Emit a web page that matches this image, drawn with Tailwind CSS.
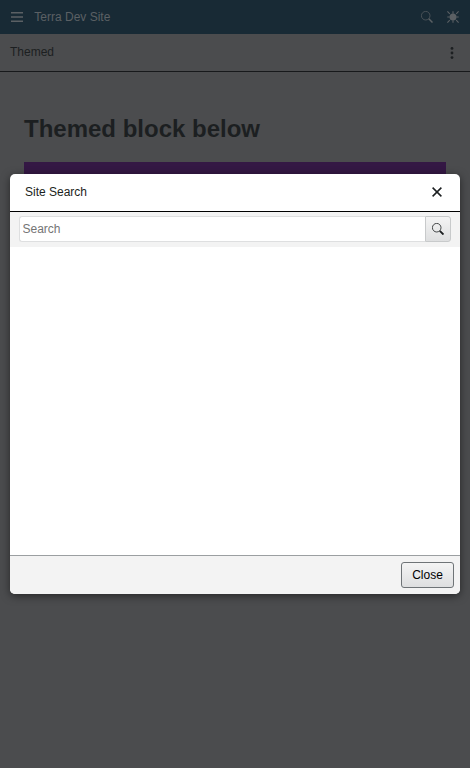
<!DOCTYPE html>
<html lang="en">
<head>
<meta charset="utf-8">
<title>Terra Dev Site</title>
<script src="https://cdn.jsdelivr.net/npm/@tailwindcss/browser@4"></script>
</head>
<body class="h-screen overflow-hidden bg-[#4b4c4e] font-['Liberation_Sans',Arial,sans-serif] text-xs text-[#1c1f21]">
<header class="flex h-[34px] items-center bg-[#182a35] pr-[11px] pl-[11px] text-[#5b6064]">
  <svg class="h-3 w-3" viewBox="0 0 12 12" fill="currentColor"><path d="M0 1h12v1.4H0zM0 5.3h12v1.4H0zM0 9.6h12V11H0z"/></svg>
  <span class="ml-[11.3px] flex-1 leading-[34px]">Terra Dev Site</span>
  <svg class="mr-[14px] h-3 w-3" viewBox="0 0 12 12" fill="none" stroke="currentColor"><circle cx="4.7" cy="4.7" r="4.3" stroke-width=".7"/><path d="M7.8 7.8l3.7 3.7" stroke-width="1.5"/></svg>
  <svg class="h-3 w-3" viewBox="0 0 12 12" fill="none" stroke="currentColor"><circle cx="6" cy="6" r="3.5" fill="currentColor" stroke="none"/><path d="M6 .3v2.4M6 9.3v2.4M.3 6h2.4M9.3 6h2.4M.4.4l2.4 2.4M9.2 9.2l2.4 2.4M11.6.4L9.2 2.8M2.8 9.2L.4 11.6" stroke-width="1.1"/></svg>
</header>
<div class="flex h-[38px] items-center justify-between border-b border-[#17191b] pr-[16px] pb-px pl-[10px]">
  <span class="leading-4">Themed</span>
  <svg class="mt-[2px] h-3 w-[4px]" viewBox="0 0 4 12" fill="currentColor"><circle cx="2" cy="1.4" r="1.4"/><circle cx="2" cy="6" r="1.4"/><circle cx="2" cy="10.6" r="1.4"/></svg>
</div>
<main class="px-6 pt-[42px]">
  <h1 class="text-2xl leading-[30px] font-bold">Themed block below</h1>
  <div class="mt-[18px] h-[50px] bg-[#341844]"></div>
</main>

<section role="dialog" aria-label="Site Search" class="absolute top-[174px] left-[10px] flex h-[420px] w-[450px] flex-col overflow-hidden rounded-[5px] bg-white shadow-[0_2px_8px_rgba(0,0,0,0.5)]">
  <div class="flex h-[38px] items-center justify-between border-b border-black pr-[18px] pb-px pl-[15px]">
    <span class="leading-4">Site Search</span>
    <svg class="h-[10px] w-[10px]" viewBox="0 0 10 10" fill="none" stroke="#1c1f21" stroke-width="1.5"><path d="M.6.6l8.8 8.8M9.4.6L.6 9.4"/></svg>
  </div>
  <div class="flex h-[35px] items-start bg-[#f3f3f3] px-[9px] pt-1">
    <input type="text" placeholder="Search" class="h-[26px] min-w-0 flex-1 rounded-l-[3px] border border-r-0 border-[#dedfe0] bg-white px-[2.5px] text-xs placeholder:text-[#757575]">
    <button aria-label="Search" class="flex h-[26px] w-[26px] items-center justify-center rounded-r-[3px] border border-[#c8cacb] bg-gradient-to-b from-[#f4f4f4] to-[#dedfe0]">
      <svg class="h-3 w-3" viewBox="0 0 12 12" fill="none" stroke="#1c1f21"><circle cx="4.7" cy="4.7" r="4.3" stroke-width=".8"/><path d="M7.8 7.8l3.7 3.7" stroke-width="1.9"/></svg>
    </button>
  </div>
  <div class="flex-1"></div>
  <div class="flex h-[39px] items-start justify-end border-t border-[#9b9fa1] bg-[#f3f3f3] pt-[6px] pr-[6px]">
    <button class="h-[26px] w-[53px] rounded-[3px] border border-[#6f7477] bg-gradient-to-b from-[#f4f4f4] to-[#dedfe0] text-xs text-black">Close</button>
  </div>
</section>
</body>
</html>
